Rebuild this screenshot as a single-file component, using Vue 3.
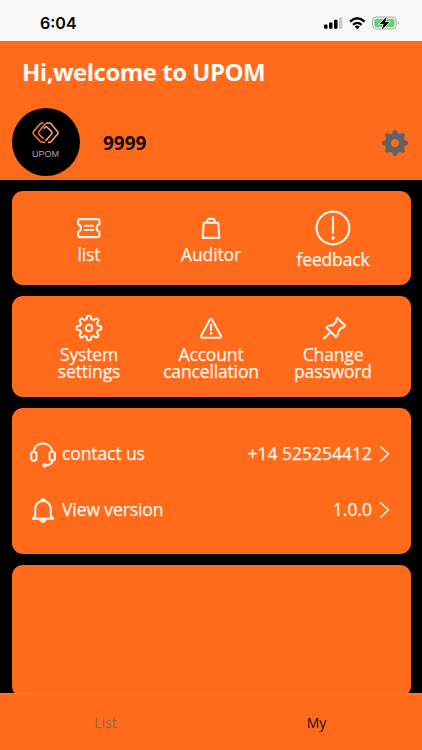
<script setup>
// Closed outline of an eight-toothed gear with rounded teeth
function gear(cx, cy, radius, depth, sharpness) {
  const points = []
  for (let i = 0; i < 240; i++) {
    const a = (i / 240) * Math.PI * 2
    const r = radius + (depth * Math.tanh(sharpness * (Math.cos(8 * a) - 0.05))) / Math.tanh(sharpness)
    points.push(`${(cx + r * Math.cos(a)).toFixed(2)} ${(cy + r * Math.sin(a)).toFixed(2)}`)
  }
  return `M${points.join('L')}Z`
}
const solidGear = gear(14, 14, 11.6, 1.6, 1.6)
const lineGear = gear(14, 14, 10.7, 1.6, 2.2)
</script>

<template>
  <div class="screen">
    <div class="status">
      <span class="time">6:04</span>
      <svg class="signals" width="78" height="18" viewBox="0 0 78 18">
        <rect x="1" y="10.4" width="3.5" height="4.4" rx="1" />
        <rect x="6" y="8.6" width="3.5" height="6.2" rx="1" />
        <rect x="11" y="5.8" width="3.5" height="9" rx="1" />
        <rect x="16" y="3.2" width="3.5" height="11.6" rx="1" fill="#c9c9c9" />
        <g fill="none" stroke="#000" stroke-width="2.3">
          <path d="M27 7.6Q34.3 1 41.6 7.6" />
          <path d="M30 10.8Q34.3 7 38.6 10.8" />
        </g>
        <path d="M31.8 12.6Q34.3 10.5 36.8 12.6L34.3 15.2Z" />
        <rect x="49.6" y="3" width="23.6" height="12" rx="3.8" fill="#f8f8f8" stroke="#a3a3a3" />
        <rect x="51.3" y="4.7" width="20.2" height="8.6" rx="2.2" fill="#65d072" />
        <path d="M75 7.2Q77 9 75 10.8Z" fill="#999" />
        <path d="M63.8 2.4L56.5 9.9H60.6L58.8 15.8L66.4 8.1H62.2Z" stroke="#f8f8f8" stroke-width="1.4" paint-order="stroke" />
      </svg>
    </div>

    <header class="header">
      <h1>Hi,welcome to UPOM</h1>
      <div class="profile">
        <div class="avatar">
          <svg width="27" height="22" viewBox="0 0 27 22" fill="none" stroke-width="1.6" stroke-linejoin="round" stroke-linecap="round">
            <path stroke="#e9783f" d="M11 1H10Q9 1 8.2 1.9L1.6 9.4Q.6 10.8 1.6 12.2L8.2 19.4Q9 20.3 10.2 20.3H12.6" />
            <path stroke="#e9783f" d="M11.2 16.4L7 12.2Q6 10.8 7 9.4L12.4 3Q13.8 1 15.4 1" />
            <path stroke="#f2a178" d="M15.4 1H17.2Q18.4 1 19.2 1.9L25.4 9.4Q26.4 10.8 25.4 12.2L19.2 19.4Q18.3 20.4 16.6 20.4" />
            <path stroke="#f2a178" d="M12.2 6.2L13.2 5.2Q14.2 4.4 15.2 5.2L19.6 9.6Q20.6 10.8 19.6 12L14 18.4" />
          </svg>
          <span>UPOM</span>
        </div>
        <strong>9999</strong>
        <svg class="cog" width="28" height="28" viewBox="0 0 28 28">
          <path fill="#606264" fill-rule="evenodd" :d="solidGear + 'M10.1 14a3.9 3.9 0 1 0 7.8 0a3.9 3.9 0 1 0-7.8 0Z'" />
        </svg>
      </div>
    </header>

    <main>
      <section class="card row first">
        <div class="item">
          <svg width="28" height="28" viewBox="0 0 28 28">
            <path d="M5 5.1H22.8Q24.4 5.1 24.4 6.7V10.2Q21.6 11 21.6 14T24.4 17.8V21.5Q24.4 23.1 22.8 23.1H4.8Q3.2 23.1 3.2 21.5V17.8Q6 17 6 14T3.2 10.2V6.7Q3.2 5.1 5 5.1" />
            <path d="M9.7 11.8H18.3M9.7 16H18.3" />
          </svg>
          <span>list</span>
        </div>
        <div class="item">
          <svg width="28" height="28" viewBox="0 0 28 28">
            <path d="M6.8 8.7H21.2L22.3 23.9H5.7ZM10 8.7V7.5Q10 4.6 14 4.6T18 7.5V8.7" />
          </svg>
          <span>Auditor</span>
        </div>
        <div class="item large">
          <svg width="38" height="38" viewBox="0 0 38 38">
            <circle cx="19" cy="19" r="16.4" />
            <path d="M19 8V24" />
            <circle class="dot" cx="19" cy="29" r="1.8" />
          </svg>
          <span>feedback</span>
        </div>
      </section>

      <section class="card row second">
        <div class="item">
          <svg width="28" height="28" viewBox="0 0 28 28">
            <path :d="lineGear" />
            <circle cx="14" cy="14" r="3.3" />
          </svg>
          <span>System<br />settings</span>
        </div>
        <div class="item">
          <svg width="28" height="28" viewBox="0 0 28 28">
            <path d="M12.9 5.7Q14 4.2 15.1 5.7L24 21.9Q24.5 23.6 22.7 23.7H5.3Q3.5 23.6 4 21.9Z" />
            <path d="M14 10.7V16.3" />
            <circle class="dot" cx="14" cy="19.4" r="1.4" />
          </svg>
          <span>Account<br />cancellation</span>
        </div>
        <div class="item">
          <svg width="28" height="28" viewBox="0 0 28 28">
            <path d="M18.2 4L26 11.6L24.2 13.8H22.4L19 17.7Q19.6 20.3 18.4 21.6L16.9 23L7.4 13.5L9 12.2Q10.8 11 13.4 11.4L16.9 8V6ZM11.2 18.2L5.2 24.4" />
          </svg>
          <span>Change<br />password</span>
        </div>
      </section>

      <section class="card details">
        <div class="line">
          <svg width="28" height="30" viewBox="0 0 28 30">
            <path d="M4.7 12.5V11.7A9.6 9.6 0 0 1 23.3 11.7V12.5M23.3 21V22.8Q22.5 26 16.5 26.3" />
            <rect x="2.2" y="13" width="5.3" height="8.6" rx="2" />
            <rect x="20.5" y="13" width="5.3" height="8.6" rx="2" />
            <circle class="dot" cx="15.6" cy="26.2" r="2.2" />
          </svg>
          <span class="label">contact us</span>
          <span class="value">+14 525254412</span>
          <svg class="arrow" width="12" height="18" viewBox="0 0 12 18"><path d="M2 2L9.5 9L2 16" /></svg>
        </div>
        <div class="line">
          <svg width="28" height="30" viewBox="0 0 28 30">
            <path d="M4 23.6H24M6.2 21V13.7A7.8 7.8 0 0 1 21.8 13.7V21" />
            <path d="M6.2 20.5L4 23.6M21.8 20.5L24 23.6" />
            <path class="dot" d="M10.6 6.4Q11.4 3.3 14 3.3T17.4 6.4ZM10 24H18Q17 27.8 14 27.8T10 24Z" />
          </svg>
          <span class="label">View version</span>
          <span class="value">1.0.0</span>
          <svg class="arrow" width="12" height="18" viewBox="0 0 12 18"><path d="M2 2L9.5 9L2 16" /></svg>
        </div>
      </section>

      <section class="card blank"></section>
    </main>

    <nav class="tabs">
      <span>List</span>
      <span class="active">My</span>
    </nav>
  </div>
</template>

<style>
body { margin: 0; }
</style>

<style scoped>
* { box-sizing: border-box; }
.screen {
  width: 422px;
  height: 750px;
  display: flex;
  flex-direction: column;
  overflow: hidden;
  background: #000;
  color: #fff3e8;
  font-family: "Open Sans", "Noto Sans", sans-serif;
}
.status {
  height: 41px;
  flex: none;
  padding: 5px 21px 0 40px;
  display: flex;
  align-items: center;
  justify-content: space-between;
  background: #f8f8f8;
  color: #000;
}
.time { font: 600 16px Inter, sans-serif; }
.header {
  height: 139px;
  flex: none;
  padding: 13px 13px 0 12px;
  background: #ff6b1a;
}
h1 {
  margin: 0 0 0 10px;
  color: #fffaf4;
  font-size: 24px;
  line-height: 36px;
  font-weight: 700;
  letter-spacing: -0.5px;
  white-space: nowrap;
}
.profile { height: 68px; margin-top: 18px; display: flex; align-items: center; }
.avatar {
  width: 68px;
  height: 68px;
  border-radius: 50%;
  padding-top: 14px;
  display: flex;
  flex-direction: column;
  align-items: center;
  background: #000;
  color: #aaa;
  font: 9px/12px "Liberation Sans", sans-serif;
}
.avatar svg { margin-right: 2px; }
.avatar span { margin: 4px 1px 0 0; }
.profile strong { margin: 2px 0 0 23px; font-size: 19px; line-height: 24px; color: #170b03; }
.cog { margin: 1px 0 0 auto; }
main {
  height: 513px;
  flex: none;
  padding: 11px 12px 0;
  display: flex;
  flex-direction: column;
  gap: 11px;
  overflow: hidden;
}
.card { width: 399px; flex: none; border-radius: 11px; background: #ff6b1a; }
.row { padding: 0 16px; display: grid; grid-template-columns: repeat(3, 122px); }
.first { height: 94px; }
.second { height: 101px; }
.item {
  display: flex;
  flex-direction: column;
  align-items: center;
  text-align: center;
  font-size: 17.5px;
  letter-spacing: -0.15px;
  line-height: 17px;
  white-space: nowrap;
}
.item span, .line span { -webkit-text-stroke: 0.25px #fff3e8; }
.first .item { padding-top: 23px; }
.first .item.large { padding-top: 18px; }
.first .item span { margin-top: 4px; }
.second .item { padding-top: 18px; }
.second .item span { margin-top: 4px; }
svg { flex: none; }
.item svg, .line svg {
  fill: none;
  stroke: #fff3e8;
  stroke-width: 2.1;
  stroke-linecap: round;
  stroke-linejoin: round;
}
.item .dot, .line .dot { fill: #fff3e8; stroke: none; }
.details { height: 146px; padding: 18px 20px 0 17px; display: flex; flex-direction: column; }
.line { height: 56px; display: flex; align-items: center; font-size: 17.5px; white-space: nowrap; }
.label { margin: -2px 0 0 5px; letter-spacing: -0.1px; }
.value { margin: -2px 0 0 auto; }
.line .arrow { margin: -1px 0 0 7px; stroke-width: 1.7; }
.blank { height: 132px; }
.tabs {
  height: 57px;
  flex: none;
  border-top: 1px solid #ff803b;
  display: grid;
  grid-template-columns: 1fr 1fr;
  align-items: center;
  text-align: center;
  background: #ff6b1a;
  color: #8f664d;
  font-size: 14px;
}
.active { color: #211006; }
</style>
